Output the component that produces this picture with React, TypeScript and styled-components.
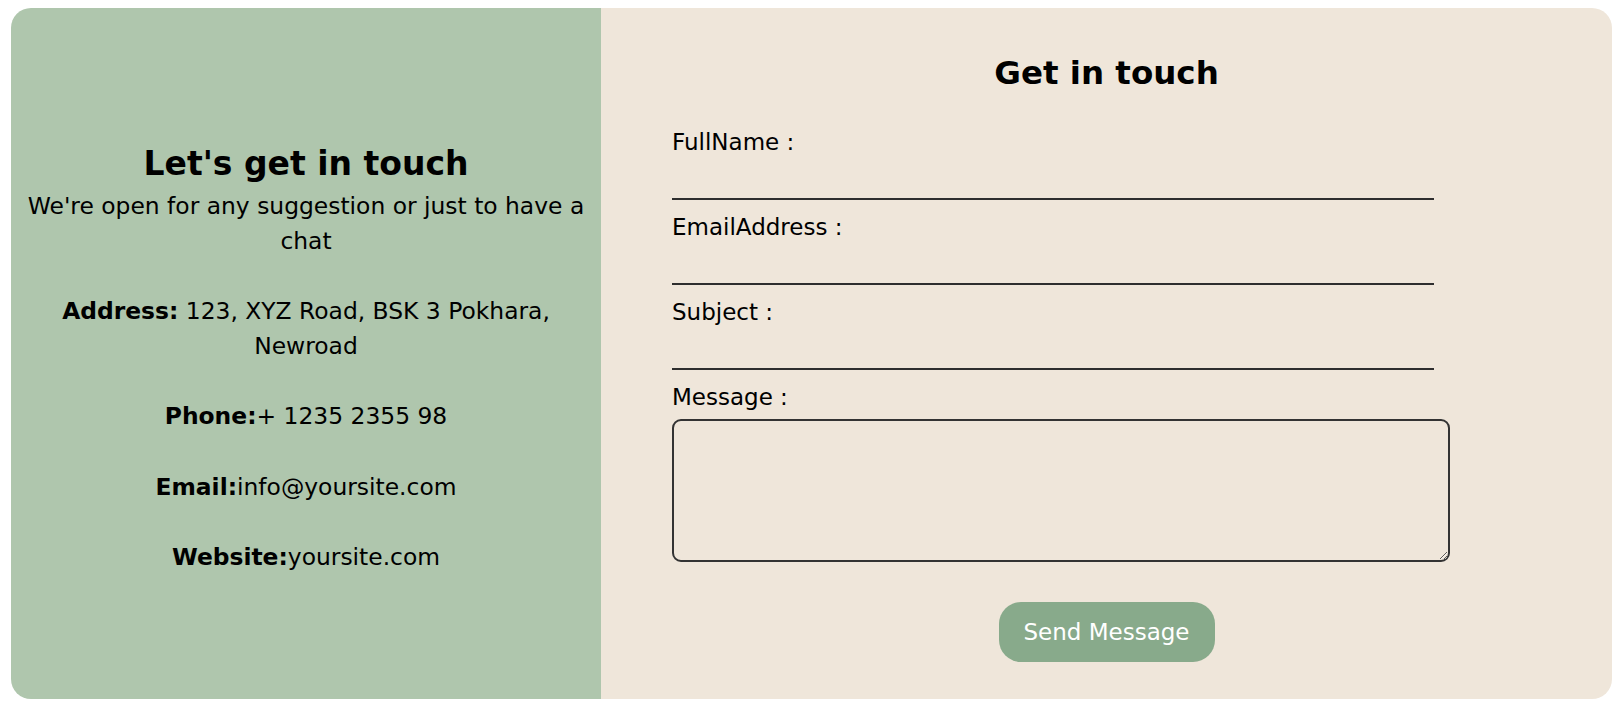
import React from "react"
import styled, { createGlobalStyle } from "styled-components"

const GlobalStyle = createGlobalStyle`
  body {
    margin: 0;
    background: #ffffff;
    font-family: "Comic Sans MS", "DejaVu Sans", sans-serif;
    color: #000;
  }
`

const Page = styled.div`
  padding: 8px 10px 4px 11px;
`

const Card = styled.div`
  display: grid;
  grid-template-columns: 590px 1fr;
  height: 691px;
  border-radius: 20px;
  overflow: hidden;
`

const InfoPanel = styled.section`
  background: #afc6ad;
  display: flex;
  flex-direction: column;
  justify-content: center;
  align-items: center;
  text-align: center;
  padding: 7px 14px 0;
`

const InfoTitle = styled.h2`
  font-size: 33px;
  font-weight: 700;
  margin: 0;
  line-height: 50px;
`

const InfoText = styled.p<{ $gap?: number }>`
  font-size: 23.4px;
  line-height: 34.5px;
  margin: ${(p) => p.$gap ?? 36}px 0 0;
`

const FormPanel = styled.section`
  background: #efe6da;
  padding: 42px 0 0 71px;
  display: flex;
  flex-direction: column;
`

const FormTitle = styled.h2`
  font-size: 32.5px;
  font-weight: 700;
  line-height: 46px;
  margin: 0 0 30px;
  text-align: center;
  padding-right: 71px;
`

const Form = styled.form`
  display: flex;
  flex-direction: column;
`

const Field = styled.div`
  display: flex;
  flex-direction: column;
  margin-bottom: 11px;
`

const Label = styled.label`
  font-size: 23px;
  line-height: 32px;
`

const LineInput = styled.input`
  width: 762px;
  height: 42px;
  box-sizing: border-box;
  border: none;
  border-bottom: 2px solid #2e2e2e;
  background: transparent;
  outline: none;
  font: inherit;
  font-size: 20px;
  padding: 0;
`

const MessageBox = styled.textarea`
  width: 778px;
  height: 143px;
  box-sizing: border-box;
  margin-top: 6px;
  border: 2px solid #333333;
  border-radius: 9px;
  background: transparent;
  font: inherit;
  font-size: 20px;
  outline: none;
`

const SendButton = styled.button`
  align-self: center;
  margin: 40px 71px 0 0;
  width: 216px;
  height: 60px;
  border: none;
  border-radius: 22px;
  background: #88aa8b;
  color: #ffffff;
  font-family: inherit;
  font-size: 23px;
  cursor: pointer;
`

export default function App() {
  return (
    <>
      <GlobalStyle />
      <Page>
        <Card>
          <InfoPanel>
            <InfoTitle>Let's get in touch</InfoTitle>
            <InfoText $gap={0}>We're open for any suggestion or just to have a chat</InfoText>
            <InfoText>
              <b>Address:</b> 123, XYZ Road, BSK 3 Pokhara, Newroad
            </InfoText>
            <InfoText>
              <b>Phone:</b>+ 1235 2355 98
            </InfoText>
            <InfoText>
              <b>Email:</b>info@yoursite.com
            </InfoText>
            <InfoText>
              <b>Website:</b>yoursite.com
            </InfoText>
          </InfoPanel>
          <FormPanel>
            <FormTitle>Get in touch</FormTitle>
            <Form onSubmit={(e) => e.preventDefault()}>
              <Field>
                <Label htmlFor="fullname">FullName :</Label>
                <LineInput id="fullname" type="text" />
              </Field>
              <Field>
                <Label htmlFor="email">EmailAddress :</Label>
                <LineInput id="email" type="email" />
              </Field>
              <Field>
                <Label htmlFor="subject">Subject :</Label>
                <LineInput id="subject" type="text" />
              </Field>
              <Label htmlFor="message">Message :</Label>
              <MessageBox id="message" />
              <SendButton type="submit">Send Message</SendButton>
            </Form>
          </FormPanel>
        </Card>
      </Page>
    </>
  )
}
